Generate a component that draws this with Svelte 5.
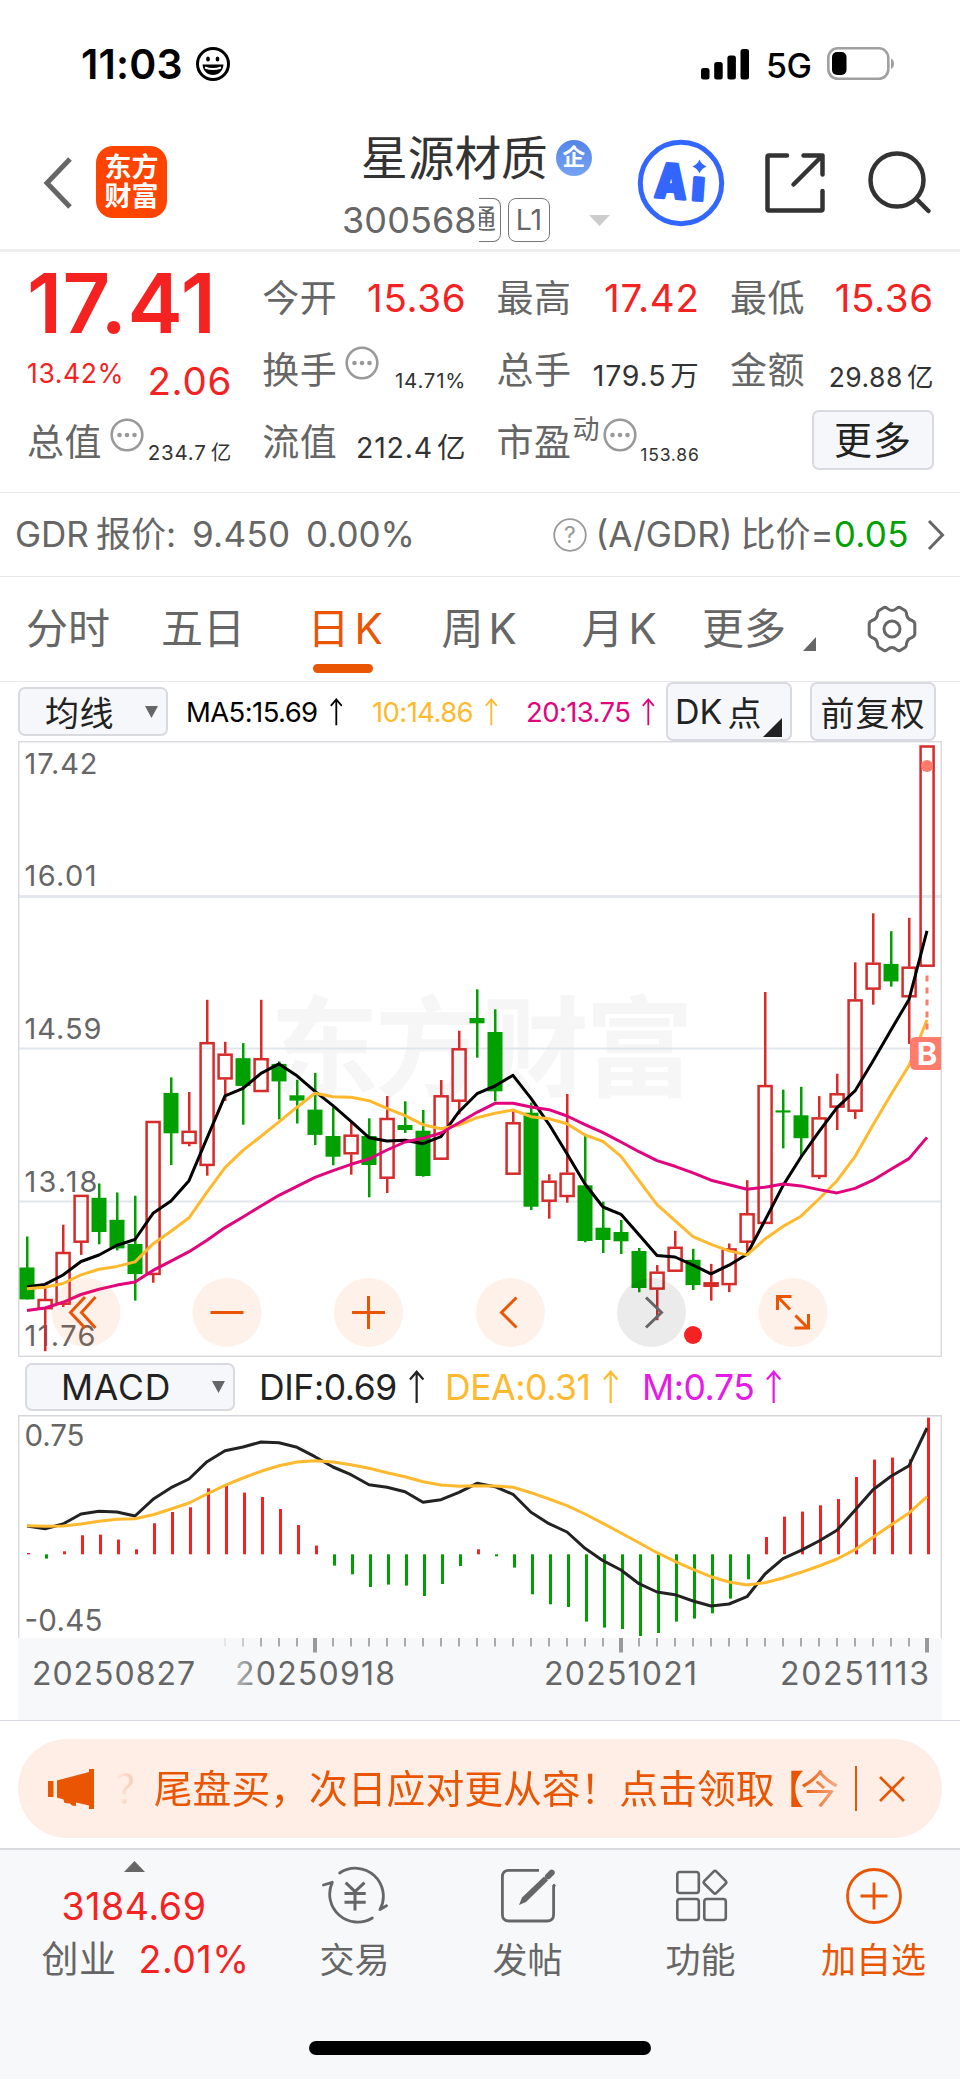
<script>
    const STEP = 18;
    const FIRST = 9;

    // high, body top, body bottom, low, u = up / d = down
    const candles = [
        [495.5, 526.5, 558.4, 558.4, "d"],
        [547, 558, 568.2, 610.2, "u"],
        [483.7, 511, 563.7, 566, "u"],
        [453.9, 453.9, 501.7, 513.9, "u"],
        [442.5, 456.8, 491, 503.3, "d"],
        [451.5, 478.8, 507.4, 509.4, "d"],
        [454.7, 502.9, 533.1, 559.6, "d"],
        [380, 380, 533.9, 541.7, "u"],
        [336.4, 351.9, 392.3, 424.1, "d"],
        [351, 389.8, 402.9, 405.3, "u"],
        [258.8, 301.2, 424.9, 434.7, "u"],
        [300.8, 312.7, 338.4, 360, "u"],
        [302.1, 317.2, 344.9, 383.7, "d"],
        [258.8, 317.2, 351, 351, "u"],
        [320.4, 322.9, 340.4, 378.4, "d"],
        [338.8, 354.3, 359.6, 382.5, "d"],
        [331.9, 368.6, 393.9, 404.1, "d"],
        [366.3, 395, 415.7, 424.3, "d"],
        [381.7, 393.7, 413.3, 433.7, "u"],
        [377.3, 395, 424, 456.3, "d"],
        [355, 377, 437.7, 452, "u"],
        [360.3, 384, 389, 392, "d"],
        [369, 389.7, 435, 435.7, "d"],
        [339, 354.3, 418.7, 418.7, "u"],
        [289.7, 307.3, 360.7, 373.3, "u"],
        [248.3, 277, 282.3, 316.7, "d"],
        [268.3, 291, 350.3, 360.3, "d"],
        [369.3, 381.3, 433.7, 433.7, "u"],
        [361.7, 371.7, 465.7, 469, "d"],
        [433.3, 439.7, 460.7, 477.7, "u"],
        [353, 431.7, 456, 461.7, "u"],
        [395, 444.3, 500, 501.3, "d"],
        [460.7, 486.7, 499, 512, "d"],
        [479, 491, 500.3, 513, "d"],
        [507, 510, 547, 551.3, "d"],
        [524.1, 530.7, 548.6, 579.2, "u"],
        [489.8, 505.8, 530.7, 530.7, "u"],
        [507.8, 518.8, 544.1, 549, "d"],
        [522.9, 541.3, 545.8, 559.6, "u"],
        [502.5, 507.4, 544.1, 551.1, "u"],
        [439.2, 472.3, 501.7, 510.3, "u"],
        [251, 344.1, 482.9, 482.9, "u"],
        [348.6, 369.4, 371.5, 407.4, "d"],
        [345.8, 374.3, 397.2, 415.6, "d"],
        [355.1, 376.4, 436, 438, "u"],
        [332.7, 352.3, 366.6, 389, "u"],
        [221.3, 258.4, 370.7, 378, "u"],
        [172.3, 221.7, 248.6, 263.7, "u"],
        [190.2, 222.9, 240.4, 245.7, "d"],
        [176.8, 225.7, 256.3, 302.9, "u"],
        [4.5, 4.5, 225.7, 225.7, "u"],
    ];

    const ma5 = [545.8, 543.4, 534, 520.5, 514, 504.2, 498.5, 472.3, 460.1, 439.7, 397.2, 354.8, 347.4, 332.3, 322.9, 334.8, 350.3, 364.7, 380.3, 396.7, 400, 399.3, 402.7, 395.7, 370.7, 352.7, 345, 334.3, 357.3, 383.3, 412.7, 443, 466, 473.3, 493.7, 514.4, 516, 524.2, 532.8, 524.2, 513.2, 479.3, 444.6, 416, 390.7, 366.6, 349.9, 320, 289, 258.4, 189.8];
    const ma10 = [547.8, 546.2, 542.5, 533.9, 528.2, 525.4, 520.9, 502.9, 490.3, 476.8, 451.1, 426.6, 409.4, 395.2, 380.9, 366.2, 352.3, 355.7, 356.3, 359.7, 367.3, 374.7, 383.7, 387.7, 384, 376.7, 372.3, 369, 375.7, 377.7, 382.7, 394, 400.3, 415.3, 439.7, 463.7, 479.7, 495.6, 503.3, 509.9, 513.9, 498, 485.4, 475.2, 458, 439.7, 415.6, 384.1, 353.5, 324.5, 278.8];
    const ma20 = [569.5, 567, 561.3, 553.5, 548.2, 544.1, 540.9, 529.4, 520.1, 510.7, 499.2, 486.6, 476, 465, 454.3, 445.4, 436.4, 429.7, 423.3, 418, 409, 401, 397.3, 392, 381.7, 371.3, 362.3, 362.3, 366, 368.7, 375, 383.7, 391.7, 401, 410.7, 419.6, 425.3, 431.9, 439.2, 443.7, 448.2, 446.2, 442.9, 444.9, 448.6, 451.9, 447.4, 439.2, 428.2, 417.6, 396.4];

    const bars = [1.3, -4.3, 3, 19, 19.7, 14.7, 5, 31, 42.3, 47, 66, 70.3, 61.7, 57.3, 45.3, 29.3, 8.7, -11.3, -20, -32.7, -30.3, -31.3, -41.7, -29.7, -11.7, 5, -2, -13.3, -40, -50, -52.7, -67.3, -73.3, -74.7, -81.7, -78.7, -67.3, -64.3, -59, -44.3, -25, 17.3, 37.7, 42.7, 49, 55.3, 77.3, 94.7, 96.7, 95, 136.7];
    const dif = [111, 113.7, 109, 99, 96.3, 97, 101, 84.3, 72.7, 64, 46.7, 35.7, 32, 27, 27.7, 32.3, 41.7, 52, 59.7, 69.7, 72.3, 76.7, 87.3, 84.7, 77.3, 68.3, 71.7, 79.3, 97.3, 108.7, 117, 133.3, 145.7, 155, 168.7, 177, 179.7, 186, 191, 189, 181.7, 159, 143.7, 135.3, 126, 115.3, 95.3, 74.7, 61.3, 50.7, 13];
    const dea = [110.7, 111.3, 111, 109, 106.3, 104.3, 103.7, 99.7, 94, 88, 79, 70.3, 63, 56.3, 50.7, 47, 45.7, 47, 49.7, 53.3, 57.7, 61.7, 66.7, 70, 71.3, 70.7, 71, 72.3, 77.7, 84, 90.7, 99, 108.3, 118, 127.7, 137.7, 146.3, 154.3, 161.7, 167, 170, 167.7, 163, 157.3, 151, 144, 134.7, 122.3, 110, 98, 81.7];

    const priceLabels = [
        { text: "17.42", y: 33, w: 73 },
        { text: "16.01", y: 145, w: 72 },
        { text: "14.59", y: 298, w: 77 },
        { text: "13.18", y: 451, w: 73 },
        { text: "11.76", y: 605, w: 71 },
    ];
    const dates = [
        { text: "20250827", x: 14, w: 163 },
        { text: "20250918", x: 217, w: 160 },
        { text: "20251021", x: 526, w: 153 },
        { text: "20251113", x: 762, w: 149 },
    ];
    const ticks = Array.from({ length: 40 }, (_, i) => i + 11);
    const major = [16, 33, 50];

    const zoomButtons = [
        { cx: 68, icon: "M67 556 52.500 571.500 67 587 M77.500 556 63.500 571.500 77.500 587" },
        { cx: 209, icon: "M192.500 571.500H225.500" },
        { cx: 350.5, icon: "M334 571.500H367M350.500 555V588" },
        { cx: 492.5, icon: "M498.500 556.500 483.500 571.500 498.500 586.500" },
        { cx: 633.5, icon: "M628 556.500 643.500 571.500 628 586.500", off: true },
        { cx: 775, icon: "M759.500 569V555.500H773.500M760 556 772 568.500M777.500 574.500 790 587M790.500 573V587H776.500" },
    ];

    const tabs = [
        { text: "分时" },
        { text: "五日" },
        { text: "日K", active: true },
        { text: "周K" },
        { text: "月K" },
        { text: "更多", more: true },
    ];

    function xAt(i) {
        return FIRST + i * STEP;
    }

    function toPoints(list) {
        return list.map((y, i) => `${xAt(i)},${y}`).join(" ");
    }
</script>

{#snippet dots()}
    <svg class="dots" width="34" height="34" viewBox="0 0 34 34">
        <circle cx="17" cy="17" r="15.300" fill="none" stroke="#999" stroke-width="2.600" />
        <circle cx="9.500" cy="17" r="2.300" fill="#999" />
        <circle cx="17" cy="17" r="2.300" fill="#999" />
        <circle cx="24.500" cy="17" r="2.300" fill="#999" />
    </svg>
{/snippet}

{#snippet arrow(size)}
    <svg class="up" width={size * 0.45} height={size} viewBox="0 0 15 34" fill="none" stroke="currentColor" stroke-width="2.200">
        <path d="M7.500 33V2M.8 9.500 7.500 1.800 14.200 9.500" />
    </svg>
{/snippet}

<div class="page">
    <div class="status">
        <span class="time">11:03</span>
        <svg class="smile" width="36" height="36" viewBox="0 0 36 36">
            <circle cx="18" cy="18" r="15.500" fill="none" stroke="#000" stroke-width="3" />
            <ellipse cx="13" cy="13" rx="1.900" ry="2.600" />
            <ellipse cx="22.500" cy="13" rx="1.900" ry="2.600" />
            <path d="M7.500 18.500H28.500C28 25 23.500 29 18 29S8 25 7.500 18.500Z" />
            <path d="M10 21.500C15 23.500 21 23.500 26 21.500" stroke="#fff" stroke-width="2" fill="none" />
        </svg>
        <svg class="signal" width="48" height="31" viewBox="0 0 48 31">
            <rect x="0" y="19" width="8.500" height="11.500" rx="2.500" />
            <rect x="13.200" y="13" width="8.500" height="17.500" rx="2.500" />
            <rect x="26.400" y="6.500" width="8.500" height="24" rx="2.500" />
            <rect x="39.500" y="0" width="8.500" height="30.500" rx="2.500" />
        </svg>
        <span class="net">5G</span>
        <svg width="68" height="34" viewBox="0 0 68 34">
            <rect x="1.300" y="1.300" width="60" height="30.500" rx="9.500" fill="none" stroke="#a0a0a0" stroke-width="2.600" />
            <rect x="5" y="5" width="14.500" height="23" rx="5" />
            <path d="M64 11.500C68 13 68 20.500 64 22Z" fill="#a0a0a0" />
        </svg>
    </div>

    <header>
        <svg class="back" width="30" height="54" viewBox="0 0 30 54">
            <path d="M28 3 5 27 28 51" fill="none" stroke="#666" stroke-width="5" />
        </svg>
        <div class="logo"><span>东方</span><span>财富</span></div>
        <div class="title">
            <div class="name">
                <span>星源材质</span>
                <i class="corp">企</i>
            </div>
            <div class="code">
                <span class="num">300568</span>
                <span class="tag cut"><b>通</b></span>
                <span class="tag">L1</span>
                <svg class="drop" width="21" height="11" viewBox="0 0 21 11"><path d="M0 0H21L10.500 11Z" fill="#ccc" /></svg>
            </div>
        </div>
        <svg class="ai" width="88" height="88" viewBox="0 0 88 88">
            <circle cx="44" cy="44" r="40.700" fill="#fff" stroke="#3366ff" stroke-width="5" />
            <g transform="rotate(4 44 60)" fill="#3366ff" stroke="#3366ff" stroke-width="3" stroke-linejoin="round" font-family="Inter, sans-serif" font-weight="900">
                <text x="17" y="60" font-size="47" textLength="32" lengthAdjust="spacingAndGlyphs">A</text>
                <text x="54" y="60" font-size="41" textLength="13" lengthAdjust="spacingAndGlyphs">ı</text>
            </g>
            <path d="M62.500 20.500Q64.500 25.500 69.500 27.500Q64.500 29.500 62.500 34.500Q60.500 29.500 55.500 27.500Q60.500 25.500 62.500 20.500Z" fill="#3366ff" />
        </svg>
        <svg class="share" width="60" height="60" viewBox="0 0 60 60" fill="none" stroke="#333" stroke-width="4.500" stroke-linecap="round" stroke-linejoin="round">
            <path d="M22 2.500H4Q2.500 2.500 2.500 4V56Q2.500 57.500 4 57.500H56Q57.500 57.500 57.500 56V38" />
            <path d="M38.500 2.500H57.500V21.500M56.500 3.500 28.500 31.500" />
        </svg>
        <svg class="search" width="64" height="64" viewBox="0 0 64 64" fill="none" stroke="#333" stroke-width="4.500">
            <circle cx="29" cy="29" r="26.500" />
            <path d="M48.500 48 60.500 60" stroke-linecap="round" />
        </svg>
    </header>

    <section class="quote">
        <div class="price">17.41</div>
        <div class="cell"><label>今开</label><span class="v big">15.36</span></div>
        <div class="cell"><label>最高</label><span class="v big">17.42</span></div>
        <div class="cell"><label>最低</label><span class="v big">15.36</span></div>

        <div class="change"><span class="pct">13.42%</span><span class="v big">2.06</span></div>
        <div class="cell"><label>换手</label>{@render dots()}<span class="v xs">14.71%</span></div>
        <div class="cell"><label>总手</label><span class="v md">179.5<em>万</em></span></div>
        <div class="cell"><label>金额</label><span class="v sm">29.88<em>亿</em></span></div>

        <div class="cell"><label>总值</label>{@render dots()}<span class="v xs">234.7<em>亿</em></span></div>
        <div class="cell"><label>流值</label><span class="v md">212.4<em>亿</em></span></div>
        <div class="cell tight"><label>市盈</label><sup>动</sup>{@render dots()}<span class="v xxs">153.86</span></div>
        <div class="cell"><button class="more">更多</button></div>
    </section>

    <section class="gdr">
        <span class="left">GDR<em>报价:</em></span>
        <span class="n1">9.450</span>
        <span class="n2">0.00%</span>
        <svg class="help" width="34" height="34" viewBox="0 0 34 34">
            <circle cx="17" cy="17" r="15.800" fill="none" stroke="#999" stroke-width="1.800" />
            <text x="17" y="25" text-anchor="middle" font-size="23" font-family="Inter, sans-serif" fill="#999">?</text>
        </svg>
        <span class="ratio">(A/GDR)<em>比价</em>=</span><span class="green">0.05</span>
        <svg class="go" width="18" height="32" viewBox="0 0 18 32"><path d="M2 2 15.500 16 2 30" fill="none" stroke="#666" stroke-width="3" /></svg>
    </section>

    <nav class="tabs">
        {#each tabs as tab}
            <div class="tab" class:active={tab.active} class:drop-tab={tab.more}>
                <span class:k={tab.text.endsWith("K")}>{tab.text}</span>
                {#if tab.more}
                    <svg width="13" height="14" viewBox="0 0 13 14"><path d="M13 0V14H0Z" fill="#666" /></svg>
                {/if}
            </div>
        {/each}
        <div class="tab gear">
            <svg width="50" height="48" viewBox="0 0 50 48" fill="none" stroke="#666" stroke-width="3" stroke-linejoin="round">
                <path d="M17 2.500Q19 2 20.500 3.500Q25 7.500 29.500 3.500Q31 2 33 2.500L38 5.500Q39.500 6.500 39.500 9Q40 14 45 15.500Q47.500 16.500 47.800 18.500V29.500Q47.500 31.500 45 32.500Q40 34 39.500 39Q39.500 41.500 38 42.500L33 45.500Q31 46 29.500 44.500Q25 40.500 20.500 44.500Q19 46 17 45.500L12 42.500Q10.500 41.500 10.500 39Q10 34 5 32.500Q2.500 31.500 2.200 29.500V18.500Q2.500 16.500 5 15.500Q10 14 10.500 9Q10.500 6.500 12 5.500Z" />
                <circle cx="25" cy="24" r="8" />
            </svg>
        </div>
    </nav>

    <section class="ma-row">
        <button class="box ma-select">均线<svg width="13" height="12" viewBox="0 0 13 12"><path d="M0 0H13L6.500 12Z" fill="#666" /></svg></button>
        <span class="ma m5">MA5:15.69{@render arrow(28)}</span>
        <span class="ma m10">10:14.86{@render arrow(28)}</span>
        <span class="ma m20">20:13.75{@render arrow(28)}</span>
        <button class="box dk">DK<em>点</em><svg width="19" height="19" viewBox="0 0 19 19"><path d="M19 0V19H0Z" fill="#222" /></svg></button>
        <button class="box adj">前复权</button>
    </section>

    <svg class="kline" width="924" height="616" viewBox="0 0 924 616">
        <text class="mark" x="252" y="347" textLength="424">东方财富</text>
        <path d="M0 155.500H924" stroke="#e4e7ee" stroke-width="3" />
        <path d="M0 307.500H924M0 460.500H924" stroke="#e1e5ec" stroke-width="2" />
        <rect x=".75" y=".75" width="922.500" height="614.500" fill="none" stroke="#d5d6da" stroke-width="1.300" />

        {#each priceLabels as l}
            <text class="axis" x="6.500" y={l.y} textLength={l.w}>{l.text}</text>
        {/each}

        {#each candles as [high, top, bottom, low, dir], i}
            {#if dir === "d"}
                <rect x={xAt(i) - 1} y={high} width="2.500" height={low - high} fill="#00a000" />
                <rect x={xAt(i) - 7.5} y={top} width="15" height={bottom - top} fill="#00a000" />
            {:else}
                <rect x={xAt(i) - 1} y={high} width="2.500" height={top - high} fill="#d62b2b" />
                <rect x={xAt(i) - 1} y={bottom} width="2.500" height={low - bottom} fill="#d62b2b" />
                <rect
                    x={xAt(i) - 6.4}
                    y={top + 1}
                    width="13"
                    height={Math.max(bottom - top - 2, 2)}
                    fill="none"
                    stroke="#d62b2b"
                    stroke-width="2.500"
                />
            {/if}
        {/each}

        <polyline class="line" points={toPoints(ma5)} stroke="#000" />
        <polyline class="line" points={toPoints(ma10)} stroke="#ffb92e" />
        <polyline class="line" points={toPoints(ma20)} stroke="#e1057d" />

        <circle cx="909" cy="25" r="6" fill="#ff7b6b" />
        <path d="M909 234.500V290" stroke="#ff7b6b" stroke-width="3" stroke-dasharray="6 6" />
        <path d="M923 296H898Q892 296 892 302V323Q892 329 898 329H923Z" fill="#ff7b6b" />
        <text class="badge-b" x="909" y="323.500">B</text>

        {#each zoomButtons as b}
            <circle cx={b.cx} cy="571.500" r="34.500" fill={b.off ? "rgba(0,0,0,.08)" : "rgba(245,95,20,.09)"} />
            <path d={b.icon} fill="none" stroke={b.off ? "#666" : "#ea5504"} stroke-width="3" />
        {/each}
        <circle cx="675" cy="594" r="9" fill="#f52222" />
    </svg>

    <section class="macd-row">
        <button class="box macd-select">MACD<svg width="13" height="12" viewBox="0 0 13 12"><path d="M0 0H13L6.500 12Z" fill="#666" /></svg></button>
        <span class="dif">DIF:0.69{@render arrow(34)}</span>
        <span class="dea">DEA:0.31{@render arrow(34)}</span>
        <span class="m">M:0.75{@render arrow(34)}</span>
    </section>

    <svg class="macd" width="924" height="223" viewBox="0 0 924 223">
        <path d="M.75 223V.75H923.250V223" fill="none" stroke="#d5d6da" stroke-width="1.300" />
        {#each bars as h, i}
            <rect
                x={xAt(i)}
                y={h > 0 ? 139.3 - h : 139.3}
                width="3"
                height={Math.abs(h)}
                fill={h > 0 ? "#f52222" : "#00a000"}
            />
        {/each}
        <polyline class="line" points={toPoints(dif)} stroke="#222" />
        <polyline class="line" points={toPoints(dea)} stroke="#ffb92e" />
        <text class="axis m-axis" x="6.500" y="30.700" textLength="60">0.75</text>
        <text class="axis m-axis" x="6.500" y="215.700" textLength="78">-0.45</text>
    </svg>

    <svg class="dates" width="924" height="82" viewBox="0 0 924 82">
        <defs>
            <linearGradient id="fade">
                <stop offset="0" stop-color="#f7f8fa" />
                <stop offset=".3" stop-color="#f7f8fa" stop-opacity=".7" />
                <stop offset="1" stop-color="#f7f8fa" stop-opacity="0" />
            </linearGradient>
        </defs>
        <rect width="924" height="82" fill="#f7f8fa" />
        {#each ticks as t}
            {#if major.includes(t)}
                <rect x={xAt(t) - 2} y="0" width="4" height="14.500" fill="#999" />
            {:else}
                <rect x={xAt(t) - 1} y="0" width="2" height="8.500" fill="#aaa" />
            {/if}
        {/each}
        {#each dates as d}
            <text class="axis d-axis" x={d.x} y="46.500" textLength={d.w}>{d.text}</text>
        {/each}
        <rect x="196" y="0" width="50" height="82" fill="url(#fade)" />
    </svg>

    <section class="notice-wrap">
        <div class="notice">
            <svg class="horn" width="46" height="40" viewBox="0 0 46 40" fill="#ea5504">
                <path d="M0 12H5.500V28H0ZM9 11.500 41 3V0H46V40H41V36.500L28 33.500V37L24 36.500 22 34.500 16.500 34 15.500 30.500 9 28.500Z" />
            </svg>
            <div class="scroll">？尾盘买，次日应对更从容！点击领取<span class="bracket">【</span>今</div>
            <i class="sep"></i>
            <svg class="close" width="26" height="26" viewBox="0 0 26 26"><path d="M1 1 25 25M25 1 1 25" stroke="#ea5504" stroke-width="2.600" /></svg>
        </div>
    </section>

    <footer>
        <div class="index">
            <svg width="21" height="11" viewBox="0 0 21 11"><path d="M10.500 0 21 11H0Z" fill="#666" /></svg>
            <div class="point">3184.69</div>
            <div class="row"><span>创业</span><span class="rate">2.01%</span></div>
        </div>
        <div class="item">
            <svg width="66" height="60" viewBox="-3 0 66 60" fill="none" stroke="#666" stroke-width="2.800" stroke-linecap="round" stroke-linejoin="round">
                <path d="M14.700 7A28 28 0 0 1 55 43.500L61.500 39.700" />
                <path d="M-1.500 19 7.300 16.300A28 28 0 0 0 47.300 52" />
                <path d="M20.700 16.700 30 25.700 39.500 16.700M19.500 27.500H40.700M19.500 36.300H40.700M30 26V44.500" stroke-linecap="butt" stroke-width="3" />
            </svg>
            <span>交易</span>
        </div>
        <div class="item">
            <svg width="60" height="60" viewBox="0 0 60 60" fill="none" stroke="#666" stroke-width="2.800">
                <path d="M41 4.400H11Q4.400 4.400 4.400 11V48.500Q4.400 55 11 55H49Q55.600 55 55.600 48.500V20L57 18.500" />
                <path d="M21 39 24 31.500 46 10.500 50 14.500 28 36Z" fill="#666" stroke="none" />
                <path d="M50 10.300 53.700 6.600" stroke-width="6" stroke-linecap="round" />
            </svg>
            <span>发帖</span>
        </div>
        <div class="item">
            <svg width="60" height="60" viewBox="0 0 60 60" fill="none" stroke="#666" stroke-width="2.600">
                <rect x="6.300" y="6" width="21.500" height="21" rx="2.500" />
                <rect x="6.300" y="33" width="21.500" height="21" rx="2.500" />
                <rect x="33.300" y="33" width="21.500" height="21" rx="2.500" />
                <rect x="35.500" y="7.800" width="17" height="17" rx="2" transform="rotate(45 44 16.300)" />
            </svg>
            <span>功能</span>
        </div>
        <div class="item add">
            <svg width="60" height="60" viewBox="0 0 60 60" fill="none" stroke="#ea5504" stroke-width="2.800">
                <circle cx="30" cy="30" r="26.500" />
                <path d="M16.500 30H43.500M30 16.500V43.500" />
            </svg>
            <span>加自选</span>
        </div>
        <div class="home"></div>
    </footer>
</div>

<style>
    :global(body) {
        margin: 0;
        background: #fff;
    }

    .page {
        width: 960px;
        height: 2079px;
        overflow: hidden;
        background: #fff;
        color: #666;
        font-family: Inter, "Noto Sans CJK SC", sans-serif;
        display: flex;
        flex-direction: column;
        white-space: nowrap;
    }

    .page > * {
        box-sizing: border-box;
        flex: none;
    }

    svg {
        display: block;
        flex: none;
    }

    em, i, label {
        font-style: normal;
    }

    button {
        font: inherit;
        padding: 0;
        color: #222;
        background: #f6f7fa;
        border: 2px solid #d8dae0;
        border-radius: 7px;
        box-sizing: border-box;
    }

    .status {
        height: 128px;
        padding: 0 65px 0 81px;
        display: flex;
        align-items: center;
        color: #000;
    }

    .time {
        width: 114px;
        font-size: 41px;
        font-weight: 600;
        letter-spacing: 0.2px;
    }

    .signal {
        margin-left: auto;
    }

    .net {
        width: 44px;
        margin: 2px 17px 0;
        font-size: 34px;
        font-weight: 500;
        letter-spacing: -0.5px;
    }

    header {
        height: 124px;
        border-bottom: 3px solid #eee;
        display: flex;
        align-items: flex-start;
    }

    .back {
        margin: 28px 24px 0 42px;
    }

    .logo {
        width: 71px;
        height: 72px;
        margin-top: 18px;
        border-radius: 17px;
        background: #ff4400;
        color: #fff;
        font-size: 27px;
        font-weight: 700;
        line-height: 29px;
        display: flex;
        flex-direction: column;
        align-items: center;
        justify-content: center;
    }

    .title {
        width: 295px;
        margin-left: 175px;
    }

    .name {
        height: 60px;
        padding-left: 19px;
        display: flex;
        align-items: center;
        font-size: 46.7px;
        line-height: 60px;
        color: #333;
    }

    .corp {
        width: 36px;
        height: 36px;
        margin-left: 8px;
        border-radius: 50%;
        background: linear-gradient(#5584ea, #76a3f0);
        color: #fff;
        font-size: 23px;
        font-weight: 700;
        line-height: 34px;
        text-align: center;
    }

    .code {
        height: 45px;
        margin-top: 9px;
        display: flex;
        align-items: center;
    }

    .code .num {
        width: 137px;
        font-size: 36px;
        letter-spacing: 0.1px;
    }

    .tag {
        box-sizing: border-box;
        width: 42px;
        height: 44px;
        border: 1.5px solid #777;
        border-radius: 8px;
        font-size: 28.5px;
        line-height: 41px;
        text-align: center;
    }

    .cut {
        width: 22px;
        margin-right: 7px;
        border-left: none;
        border-radius: 0 8px 8px 0;
        overflow: hidden;
        display: flex;
        justify-content: flex-end;
        padding-right: 4px;
    }

    .cut b {
        font-weight: 400;
        font-size: 27px;
    }

    .drop {
        margin: 2px 0 0 39px;
    }

    .ai {
        margin-top: 11px;
    }

    .share {
        margin: 25px 0 0 40px;
    }

    .search {
        margin: 23px 0 0 43px;
    }

    .quote {
        height: 241px;
        padding: 10px 26px 0 27px;
        border-bottom: 1px solid #e8e8e8;
        display: grid;
        grid-template-columns: 205px 204px 203px 204px;
        grid-template-rows: 72px 72px 72px;
        column-gap: 30.3px;
    }

    .price {
        font-size: 83px;
        font-weight: 600;
        line-height: 82px;
        letter-spacing: 0.5px;
        color: #f52222;
    }

    .cell {
        display: flex;
        align-items: flex-start;
    }

    .cell label {
        font-size: 37px;
        line-height: 73px;
        letter-spacing: 0.5px;
    }

    /* smaller values hang lower in the row */
    .v {
        margin-left: auto;
        color: #333;
    }

    .v em {
        margin-left: 4px;
    }

    .v.big {
        font-size: 38.5px;
        line-height: 72px;
        letter-spacing: 0.7px;
        color: #f52222;
    }

    .v.md {
        font-size: 28.5px;
        line-height: 83px;
        letter-spacing: 0.8px;
    }

    .v.sm {
        font-size: 26.5px;
        line-height: 87px;
        letter-spacing: 0.5px;
    }

    .v.xs {
        font-size: 20.5px;
        line-height: 93px;
        letter-spacing: 0.8px;
    }

    .v.xxs {
        font-size: 17.5px;
        line-height: 97px;
        letter-spacing: 0.8px;
    }

    .dots {
        margin: 12px 0 0 8px;
    }

    .tight .dots {
        margin-left: 3px;
    }

    sup {
        margin-left: 1px;
        font-size: 27px;
        line-height: 48px;
    }

    .change {
        display: flex;
        align-items: flex-start;
        color: #f52222;
    }

    .pct {
        font-size: 26.5px;
        line-height: 79px;
        letter-spacing: 0.6px;
    }

    .change .v.big {
        line-height: 94px;
    }

    .more {
        width: 122px;
        height: 60px;
        margin: 4px 0 0 auto;
        font-size: 38px;
        line-height: 54px;
        letter-spacing: 1px;
    }

    .gdr {
        height: 84px;
        padding: 0 15px 0 15px;
        border-bottom: 1px solid #e8e8e8;
        display: flex;
        align-items: center;
        font-size: 35px;
        line-height: 44px;
    }

    .gdr span {
        height: 46px;
    }

    .gdr em {
        margin: 0 1px 0 7px;
    }

    .n1 {
        width: 114px;
        margin-left: 15px;
        letter-spacing: 0.3px;
    }

    .help {
        margin: 0 9px 0 auto;
    }

    .ratio em {
        margin: 0 0 0 8px;
    }

    .green {
        color: #00a000;
        letter-spacing: 0.4px;
    }

    .go {
        margin-left: 18px;
    }

    .tabs {
        height: 105px;
        border-bottom: 1px solid #e8e8e8;
        display: grid;
        grid-template-columns: 136px 134px 152px 116px 164px 122px 136px;
        font-size: 42px;
    }

    .tab {
        height: 104px;
        padding-bottom: 8px;
        box-sizing: border-box;
        display: flex;
        align-items: center;
        justify-content: center;
    }

    .k {
        letter-spacing: 5px;
        margin-right: -3px;
    }

    .gear {
        padding-bottom: 1px;
    }

    .active {
        position: relative;
        color: #ea5504;
    }

    .active::after {
        content: "";
        position: absolute;
        left: 43px;
        bottom: 8px;
        width: 60px;
        height: 9px;
        border-radius: 5px;
        background: #ea5504;
    }

    .drop-tab {
        justify-content: flex-start;
    }

    .drop-tab svg {
        margin: 38px 0 0 17px;
    }

    .ma-row {
        height: 59px;
        padding-left: 18px;
        display: flex;
        align-items: center;
        font-size: 27.5px;
    }

    .box {
        display: flex;
        align-items: center;
        font-size: 34px;
    }

    .ma-select {
        width: 150px;
        height: 49px;
        margin-right: 18px;
        padding: 0 8px 0 25px;
        justify-content: space-between;
        letter-spacing: 0.5px;
    }

    .ma {
        display: flex;
        align-items: center;
        letter-spacing: -0.6px;
    }

    .up {
        margin-left: 12px;
    }

    .m5 {
        width: 186px;
        color: #000;
    }

    .m10 {
        width: 154px;
        color: #ffb92e;
    }

    .m20 {
        width: 140px;
        color: #e1057d;
    }

    .dk {
        width: 126px;
        height: 59px;
        padding-left: 7px;
    }

    .dk em {
        margin-left: 5px;
    }

    .dk svg {
        margin: 31px 0 0 2px;
    }

    .adj {
        width: 126px;
        height: 59px;
        margin-left: 18px;
        justify-content: center;
        letter-spacing: 1px;
    }

    .kline, .macd, .dates {
        margin-left: 18px;
    }

    .axis {
        font-size: 29px;
        fill: #666;
    }

    .m-axis {
        font-size: 29.5px;
    }

    .d-axis {
        font-size: 32px;
    }

    .mark {
        font-family: "Noto Sans CJK SC", sans-serif;
        font-size: 109px;
        font-weight: 700;
        fill: #f6f6f6;
    }

    .badge-b {
        font-size: 31px;
        font-weight: 700;
        fill: #fff;
        text-anchor: middle;
    }

    .line {
        fill: none;
        stroke-width: 3;
        stroke-linejoin: round;
    }

    .macd-row {
        height: 58px;
        padding: 1px 0 0 25px;
        display: flex;
        align-items: center;
        font-size: 35.5px;
        letter-spacing: -0.4px;
    }

    .macd-row span {
        padding-top: 1px;
        display: flex;
        align-items: center;
    }

    .macd-row .up {
        margin-left: 12px;
    }

    .macd-select {
        width: 210px;
        height: 48px;
        margin-right: 24px;
        padding: 1px 8px 0 34px;
        justify-content: space-between;
        font-size: 35.5px;
        letter-spacing: 0.8px;
    }

    .dif {
        width: 186px;
        color: #222;
    }

    .dea {
        width: 197px;
        color: #ffb92e;
    }

    .m {
        color: #e61ae6;
    }

    .notice-wrap {
        height: 130px;
        padding: 18px 18px 0;
        border-top: 1px solid #d5d8de;
        border-bottom: 2px solid #d9dbdf;
    }

    .notice {
        height: 99px;
        padding-left: 30px;
        border-radius: 49px;
        background: #feeee6;
        display: flex;
        align-items: center;
    }

    .scroll {
        width: 730px;
        margin-left: 21px;
        padding-top: 1px;
        overflow: hidden;
        font-size: 38.8px;
        line-height: 60px;
        color: #ea5504;
        mask-image: linear-gradient(90deg, transparent, rgba(0, 0, 0, 0.45) 36px, #000 44px, #000 685px, rgba(0, 0, 0, 0.3));
    }

    .bracket {
        margin: 0 -4px 0 -9px;
    }

    .sep {
        width: 2px;
        height: 45px;
        margin-left: 10px;
        background: #ea5504;
    }

    .close {
        margin-left: 22px;
    }

    footer {
        position: relative;
        height: 229px;
        background: #f7f8fa;
        display: grid;
        grid-template-columns: 268px repeat(4, 173px);
    }

    .index {
        padding-top: 11px;
        display: flex;
        flex-direction: column;
        align-items: center;
        font-size: 37.5px;
        color: #f52222;
    }

    .point {
        margin-top: 8px;
        line-height: 53px;
        letter-spacing: 0.6px;
    }

    .row {
        display: flex;
        gap: 22px;
        margin-left: 23px;
        line-height: 54px;
        letter-spacing: 0.5px;
    }

    .row span:first-child {
        color: #666;
        font-size: 37px;
    }

    .item {
        padding-top: 16px;
        display: flex;
        flex-direction: column;
        align-items: center;
        font-size: 35px;
        line-height: 68px;
    }

    .add {
        color: #ea5504;
    }

    .home {
        position: absolute;
        left: 309px;
        bottom: 24px;
        width: 342px;
        height: 14px;
        border-radius: 7px;
        background: #000;
    }
</style>
